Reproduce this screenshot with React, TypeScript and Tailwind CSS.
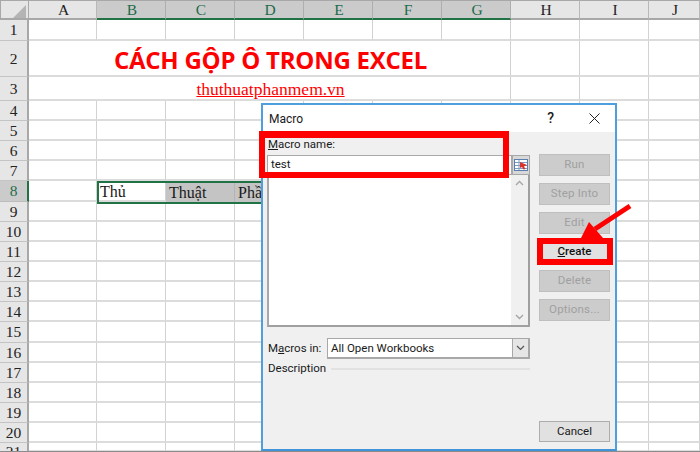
const columns = ["A", "B", "C", "D", "E", "F", "G", "H", "I", "J"];
const rows = Array.from({ length: 21 }, (_, i) => i + 1);

const dialogFont = "font-['Roboto',sans-serif] text-[11.5px] text-[#1a1a1a]";

const DisabledButton = ({ label }: { label: string }) => (
  <div className="w-[71px] h-[22px] flex items-center justify-center bg-[#cccccc] border border-[#bfbfbf] text-[#a0a0a0] text-[11.5px] tracking-[0.2px]">
    {label}
  </div>
);

const Sheet = () => (
  <div className="grid grid-cols-[29px_68px_69px_69px_69px_69px_69px_69px_69px_69px_51px] grid-rows-[20px_21px_36px_24px_20px_20px_20px_20px_21px_20px_20px_20px_20px_20px_20px_21px_20px_20px_20px_20px_20px_9px] font-['Liberation_Serif',serif] text-[#222222]">
    {/* corner */}
    <div className="relative bg-[#e6e6e6] border-t border-l border-b-2 border-r border-[#a8a8a8]">
      <svg className="absolute left-[12px] top-[4px]" width="13" height="13" viewBox="0 0 13 13">
        <polygon points="13,0 13,13 0,13" fill="#b4b4b4" />
      </svg>
    </div>
    {columns.map((c, i) => {
      const active = i >= 1 && i <= 6;
      return (
        <div
          key={c}
          className={
            active
              ? "flex items-center justify-center pl-[2px] bg-[#cbcbcb] border-t border-[#a8a8a8] border-r border-r-[#aeaeae] border-b-2 border-b-[#217346] text-[#1f6b4c] text-[15.5px]"
              : "flex items-center justify-center pl-[2px] bg-[#e6e6e6] border-t border-[#a8a8a8] border-r border-r-[#b8b8b8] border-b-2 border-b-[#a8a8a8] text-[15.5px]"
          }
        >
          {c}
        </div>
      );
    })}

    {rows.map((r) => (
      <Row key={r} r={r} />
    ))}
  </div>
);

const Row = ({ r }: { r: number }) => {
  const header = (
    <div
      className={
        r === 8
          ? "flex items-center justify-center bg-[#cbcbcb] border-r-2 border-r-[#217346] border-b border-b-[#bcbcbc] text-[#1f6b4c] text-[15.5px]"
          : r === 21
            ? "flex items-start justify-center overflow-hidden bg-[#e6e6e6] border-r-2 border-r-[#a8a8a8] text-[15.5px] leading-[18px]"
            : "flex items-center justify-center bg-[#e6e6e6] border-r-2 border-r-[#a8a8a8] border-b border-b-[#c4c4c4] text-[15.5px]"
      }
    >
      {r}
    </div>
  );

  if (r === 2 || r === 3) {
    return (
      <>
        {header}
        <div className="col-span-7 flex items-center justify-center pl-[2px] pt-[3px] border-r border-r-[#d2d2d2] border-b-2 border-b-[#dcdcdc] text-[#ff0000]">
          {r === 2 ? (
            <span className="font-['Open_Sans',sans-serif] font-bold text-[24px] tracking-[-0.25px] leading-none">
              CÁCH GỘP Ô TRONG EXCEL
            </span>
          ) : (
            <span className="text-[17.5px] underline leading-none">thuthuatphanmem.vn</span>
          )}
        </div>
        {columns.slice(7).map((c) => (
          <div key={c} className="border-r border-r-[#d2d2d2] border-b-2 border-b-[#dcdcdc]" />
        ))}
      </>
    );
  }

  return (
    <>
      {header}
      {columns.map((c, i) => {
        const shaded = r === 8 && i >= 2 && i <= 4;
        const text = r === 8 ? { 1: "Thủ", 2: "Thuật", 3: "Phần" }[i] : undefined;
        return (
          <div
            key={c}
            className={
              shaded
                ? "flex items-center pl-[3px] pt-[2px] bg-[#c4c4c4] border-r border-r-[#b4b4b4] text-[16px] text-[#1a1a1a]"
                : "flex items-center pl-[3px] pt-[3px] border-r border-r-[#d2d2d2] border-b-2 border-b-[#dcdcdc] text-[16px] text-[#1a1a1a]"
            }
          >
            {text}
          </div>
        );
      })}
    </>
  );
};

const Dialog = () => (
  <div
    className={`absolute left-[261px] top-[103px] w-[356px] h-[348px] flex flex-col bg-[#f0f0f0] border-2 border-[#4f9fdc] border-b-[#3f93d6] ${dialogFont}`}
  >
    <div className="h-[27px] shrink-0 bg-white flex items-center pl-[6px] text-[12px]">
      <span className="flex-1">Macro</span>
      <span className="mr-[35px] text-[14px] font-medium">?</span>
      <svg className="mr-[15px]" width="11" height="11" viewBox="0 0 11 11" stroke="#222222" strokeWidth="1">
        <path d="M0.5 0.5L10.5 10.5M10.5 0.5L0.5 10.5" />
      </svg>
    </div>

    <div className="flex-1 flex pl-[4px] pr-[5px]">
      <div className="w-[263px] flex flex-col">
        <div className="h-[23px] pt-[3px] pl-[1px] leading-[18px]">
          <span className="underline">M</span>acro name:
        </div>
        <div className="h-[20px] flex">
          <div className="flex-1 bg-white border border-[#a8a8a8] pl-[3px] leading-[17px]">test</div>
          <div className="w-[18px] flex items-center justify-center bg-[#d8d8d8] border border-[#a8a8a8]">
            <svg width="14" height="12" viewBox="0 0 14 12">
              <rect x="0.5" y="0.5" width="13" height="11" fill="#ffffff" stroke="#5a7fb0" />
              <path d="M1 3.5H13M1 6.5H13M1 9.5H13M5 1V11" stroke="#7d9cc4" />
              <path d="M6 3L13 6L10 7.5L11.5 10L9.5 10.5L8 8L6 9Z" fill="#d8322a" />
            </svg>
          </div>
        </div>
        <div className="h-[152px] flex bg-white border-l-2 border-l-[#a8a8a8] border-b-2 border-b-[#a0a0a0] border-r-2 border-r-[#a0a0a0]">
          <div className="flex-1" />
          <div className="w-[17px] flex flex-col items-center justify-between bg-[#f0f0f0] py-[5px]">
            <svg width="9" height="6" viewBox="0 0 9 6" fill="none" stroke="#a6a6a6" strokeWidth="1.4">
              <path d="M1 5L4.5 1.5L8 5" />
            </svg>
            <svg width="9" height="6" viewBox="0 0 9 6" fill="none" stroke="#a6a6a6" strokeWidth="1.4">
              <path d="M1 1L4.5 4.5L8 1" />
            </svg>
          </div>
        </div>
        <div className="mt-[11px] flex items-center h-[21px]">
          <div className="w-[60px] shrink-0 pl-[1px]">
            M<span className="underline">a</span>cros in:
          </div>
          <div className="flex-1 h-[21px] flex bg-white border border-[#a8a8a8] border-r-2 border-b-2">
            <span className="flex-1 pl-[3px] leading-[18px]">All Open Workbooks</span>
            <div className="w-[16px] flex items-center justify-center bg-[#e6e6e6] border-l border-[#a8a8a8]">
              <svg width="9" height="6" viewBox="0 0 9 6" fill="none" stroke="#555555" strokeWidth="1.2">
                <path d="M1 1L4.5 4.5L8 1" />
              </svg>
            </div>
          </div>
        </div>
        <div className="mt-[1px] h-[17px] flex items-center gap-[5px] pl-[1px]">
          <span>Description</span>
          <div className="flex-1 h-[2px] bg-[#e2e2e2]" />
        </div>
      </div>

      <div className="ml-[9px] w-[71px] flex flex-col gap-[7px] pt-[22px]">
        <DisabledButton label="Run" />
        <DisabledButton label="Step Into" />
        <DisabledButton label="Edit" />
        <div className="h-[22px] flex items-center justify-center bg-[#e1e1e1] border border-[#adadad] text-[#111111] font-medium text-[11.5px]">
          <span className="underline">C</span>reate
        </div>
        <DisabledButton label="Delete" />
        <DisabledButton label="Options..." />
        <div className="mt-auto mb-[7px] h-[21px] flex items-center justify-center bg-[#e1e1e1] border border-[#adadad] text-[11.5px]">
          Cancel
        </div>
      </div>
    </div>
  </div>
);

export default function App() {
  return (
    <div className="relative w-[700px] h-[452px] overflow-hidden bg-white border-b border-b-[#8c8c8c]">
      <Sheet />
      {/* selected range */}
      <div className="absolute left-[97px] top-[181px] w-[166px] h-[23px] border-2 border-[#217346]" />
      <Dialog />
      {/* red annotations */}
      <div className="absolute left-[259px] top-[131px] w-[250px] h-[47px] border-[6px] border-t-[7px] border-[#ff0000]" />
      <div className="absolute left-[537px] top-[238px] w-[76px] h-[27px] border-[6px] border-[#ff0000]" />
      <svg className="absolute left-[575px] top-[198px]" width="60" height="44" viewBox="0 0 60 44">
        <path d="M55 8L20 31" stroke="#ff0000" strokeWidth="5" />
        <polygon points="6,40 14,24 28,40" fill="#ff0000" />
      </svg>
    </div>
  );
}
